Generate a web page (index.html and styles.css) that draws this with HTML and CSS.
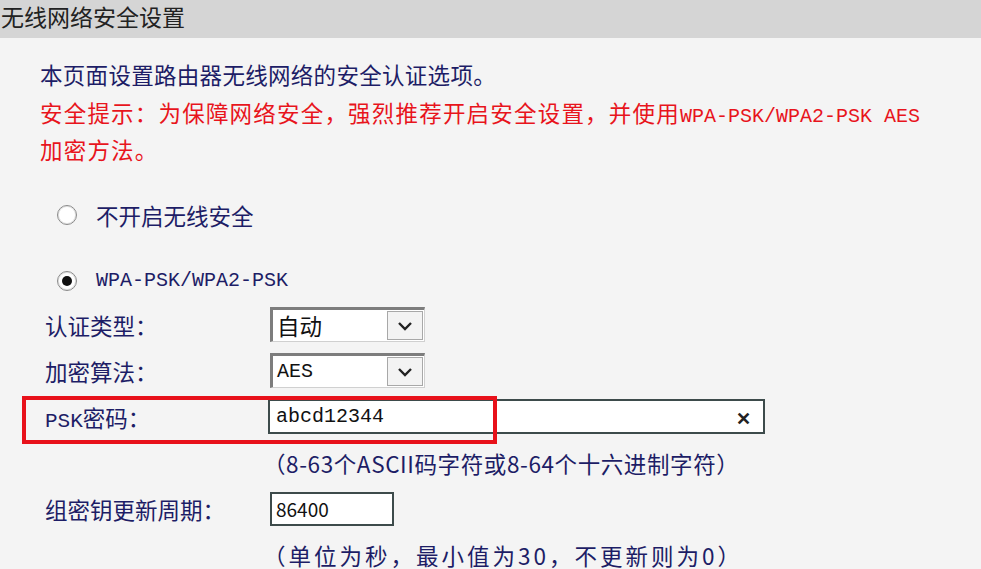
FILE: index.html
```html
<!DOCTYPE html>
<html lang="zh-CN">
<head>
  <meta charset="UTF-8" />
  <title>无线网络安全设置</title>
  <link rel="stylesheet" href="styles.css">
</head>
<body>
  <div class="title-bar">无线网络安全设置</div>

  <div class="content">
    <p class="intro">本页面设置路由器无线网络的安全认证选项。</p>
    <p class="warning">安全提示：为保障网络安全，强烈推荐开启安全设置，并使用<span class="en">WPA-PSK/WPA2-PSK AES</span><br>加密方法。</p>

    <div class="radio-row first">
      <span class="radio"></span>
      <span>不开启无线安全</span>
    </div>
    <div class="radio-row second">
      <span class="radio checked"></span>
      <span class="en">WPA-PSK/WPA2-PSK</span>
    </div>

    <div class="form">
      <div class="row">
        <span class="label">认证类型：</span>
        <div class="select">
          <span class="select-text">自动</span>
          <span class="select-btn"><svg width="16" height="10" viewBox="0 0 16 10"><path d="M2 2 L8 8 L14 2" fill="none" stroke="#222" stroke-width="2.4"/></svg></span>
        </div>
      </div>
      <div class="row">
        <span class="label">加密算法：</span>
        <div class="select">
          <span class="select-text en">AES</span>
          <span class="select-btn"><svg width="16" height="10" viewBox="0 0 16 10"><path d="M2 2 L8 8 L14 2" fill="none" stroke="#222" stroke-width="2.4"/></svg></span>
        </div>
      </div>
      <div class="row psk-row">
        <span class="label"><span class="en">PSK</span>密码：</span>
        <div class="input wide">
          <span class="en">abcd12344</span>
          <span class="clear">✕</span>
        </div>
        <div class="highlight"></div>
      </div>
      <div class="row hint">（8-63个ASCII码字符或8-64个十六进制字符）</div>
      <div class="row">
        <span class="label">组密钥更新周期：</span>
        <div class="input small">86400</div>
      </div>
      <div class="row hint wide-gap">（单位为秒，最小值为30，不更新则为0）</div>
    </div>
  </div>
</body>
</html>
```

FILE: styles.css
```css
body {
  margin: 0;
  background: #f4f4f4;
  font-family: "Noto Sans CJK SC", "Noto Sans", sans-serif;
  font-size: 22.5px;
  color: #1d1d66;
  overflow: hidden;
}
.en {
  font-family: "Liberation Mono", "Noto Sans CJK SC", monospace;
  font-size: 20px;
  line-height: 1;
  letter-spacing: 0;
}
.title-bar {
  height: 38px;
  background: #d5d5d5;
  color: #222;
  font-size: 23px;
  line-height: 32px;
  padding-left: 1px;
}
.content {
  padding: 18px 0 0 40px;
}
p {
  margin: 0;
  line-height: 37.5px;
}
.intro {
  letter-spacing: 0.3px;
}
.warning {
  color: #e8141c;
  letter-spacing: 1.2px;
}
.radio-row {
  display: flex;
  align-items: center;
  height: 38px;
  margin-left: 17px;
  gap: 19px;
}
.radio-row.first {
  margin-top: 27px;
}
.radio-row.second {
  margin-top: 28px;
}
.radio {
  width: 18px;
  height: 18px;
  border: 1px solid #8a8a8a;
  border-radius: 50%;
  background: #fff;
  box-shadow: inset 0 0 0 1px #e0e0e0;
  display: flex;
  align-items: center;
  justify-content: center;
}
.radio.checked::after {
  content: "";
  width: 10px;
  height: 10px;
  border-radius: 50%;
  background: #111;
}
.form {
  margin-top: 2px;
  margin-left: 5px;
}
.row {
  display: flex;
  align-items: center;
  height: 46px;
  position: relative;
}
.label {
  width: 225px;
  flex: none;
}
.label .en {
  font-size: 21px;
}
.hint {
  padding-left: 218px;
  letter-spacing: 0.6px;
}
.hint.wide-gap {
  letter-spacing: 3px;
}
.select {
  display: flex;
  width: 151px;
  height: 31px;
  background: #fff;
  border-top: 3px solid #7d7d7d;
  border-left: 3px solid #7d7d7d;
  border-right: 1px solid #d0d0d0;
  border-bottom: 1px solid #d0d0d0;
}
.select-text {
  flex: 1;
  padding-left: 4px;
  line-height: 31px;
  color: #111;
}
.select-btn {
  width: 34px;
  margin: 1px 1px 1px 0;
  background: #f3f3f3;
  border: 1px solid #a8a8a8;
  display: flex;
  align-items: center;
  justify-content: center;
}
.input {
  display: flex;
  align-items: center;
  height: 31px;
  background: #fff;
  border: 2px solid #3d4b4b;
  color: #111;
  padding-left: 6px;
  box-sizing: content-box;
}
.input.wide {
  width: 487px;
  margin-left: -2px;
}
.input .clear {
  margin-left: auto;
  margin-right: 12px;
  font-size: 18px;
  font-weight: bold;
  color: #222;
}
.input.small {
  width: 116px;
  height: 30px;
  font-size: 19px;
  padding-left: 4px;
}
.highlight {
  position: absolute;
  left: -23px;
  top: 2px;
  width: 467px;
  height: 40px;
  border: 4px solid #e8111a;
}
```
